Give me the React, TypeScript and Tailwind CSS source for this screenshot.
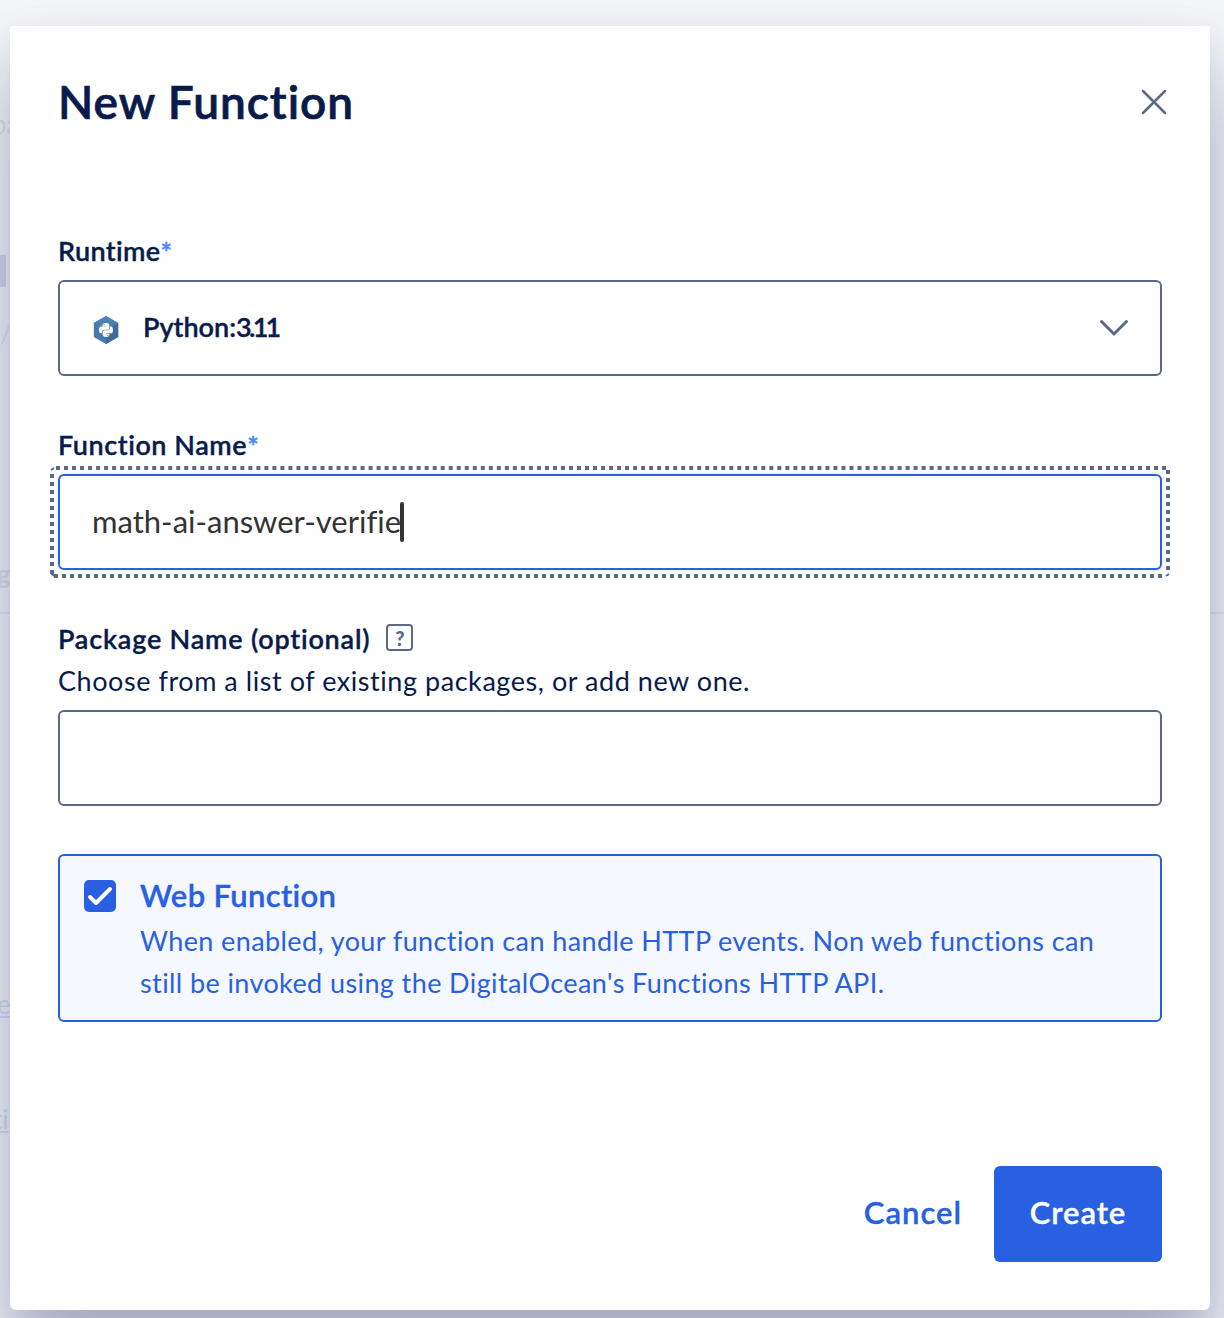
import type { ReactNode } from "react";
import { FaPython } from "react-icons/fa";

function Label({ children, required }: { children: ReactNode; required?: boolean }) {
  return (
    <span className="whitespace-nowrap text-[27px] leading-[41px] font-semibold text-[#081b4b] [-webkit-text-stroke:0.35px]">
      {children}
      {required && <span className="relative top-px tracking-normal font-bold text-[#4d88ff]">*</span>}
    </span>
  );
}

function PythonHexagon() {
  return (
    <span className="relative flex h-7 w-[26px] items-center justify-center">
      <svg viewBox="0 0 26 28" className="absolute inset-0 h-7 w-[26px]">
        <path d="M13 0 25.2 7v14L13 28 .8 21V7Z" fill="#4679ad" />
        <path d="M13 0 25.2 7 13 14 .8 7Z" fill="#4d80b8" />
        <path d="M25.2 7v14L13 28V14Z" fill="#41699d" />
      </svg>
      <FaPython className="relative size-4 text-white" />
    </span>
  );
}

function FocusRing() {
  return (
    <svg
      className="pointer-events-none absolute -top-[10px] -left-[10px] h-[112px] w-[1120px]"
      viewBox="0 0 1120 112"
      fill="none"
      stroke="#5b6987"
      strokeWidth="4"
    >
      <path d="M6 2H1116" strokeDasharray="4 4.015" />
      <path d="M4 110H1116" strokeDasharray="4 4" />
      <path d="M2 8V108" strokeDasharray="4 4" />
      <path d="M1118 4V108" strokeDasharray="4 4" />
      <path d="M1 4l3-2M1 107l3 3M1116 110l3-2" strokeWidth="2" />
    </svg>
  );
}

function Backdrop() {
  return (
    <div className="absolute inset-0 overflow-hidden bg-[#f3f5f9] text-[26px] leading-8 text-[#dfe2ea]">
      <span className="absolute -left-2 top-[108px]">pa</span>
      <div className="absolute left-0 top-[255px] h-8 w-1.5 bg-[#d3d8e6]" />
      <span className="absolute left-0 top-[317px]">/</span>
      <span className="absolute -left-[3px] top-[558px] font-bold">g</span>
      <div className="absolute left-0 top-[612px] h-0.5 w-full bg-[#e4e6ef]" />
      <span className="absolute -left-[3px] top-[988px] text-[#d2dcf5] underline">e</span>
      <span className="absolute -left-[7px] top-[1103px] text-[#d2dcf5] underline">ti</span>
    </div>
  );
}

export default function App() {
  return (
    <div className="relative h-[1318px] w-[1224px] overflow-hidden pt-[26px] pl-[10px] font-['Lato',sans-serif] [font-variant-ligatures:none]">
      <Backdrop />
      <main className="relative flex h-[1284px] w-[1200px] flex-col rounded-b-md bg-white px-12 shadow-[0_60px_80px_rgba(28,38,92,0.28),0_16px_40px_rgba(20,25,60,0.13)]">
        <header className="flex h-[152px] items-center justify-between">
          <h1 className="text-[46px] leading-none font-semibold tracking-[1px] text-[#081b4b] [-webkit-text-stroke:0.7px]">New Function</h1>
          <button aria-label="Close" className="-mr-1 size-6">
            <svg viewBox="0 0 24 24" className="size-6 overflow-visible" fill="none" stroke="#5b6987" strokeWidth="2.5" strokeLinecap="round">
              <path d="M1 1 23 23M23 1 1 23" />
            </svg>
          </button>
        </header>

        <section className="mt-[52px] flex flex-col">
          <div className="flex h-[50px] items-start tracking-[0.35px]">
            <Label required>Runtime</Label>
          </div>
          <button className="flex h-24 w-full items-center rounded-md border-2 border-[#5b6987] pr-8 pl-[33px]">
            <span className="mt-1"><PythonHexagon /></span>
            <span className="mb-0.5 ml-6 text-[27px] font-semibold text-[#081b4b] [-webkit-text-stroke:0.35px]">
              Python:<span className="tracking-[-2.7px]">3.11</span>
            </span>
            <svg viewBox="0 0 28 16" className="ml-auto h-4 w-7 overflow-visible" fill="none" stroke="#5b6987" strokeWidth="3" strokeLinecap="round" strokeLinejoin="round">
              <path d="M1.5 1.5 14 14 26.5 1.5" />
            </svg>
          </button>
        </section>

        <section className="mt-12 flex flex-col">
          <div className="flex h-[50px] items-start tracking-[0.55px]">
            <Label required>Function Name</Label>
          </div>
          <div className="relative flex h-24 items-center rounded-md border-2 border-[#2860e1] px-8 shadow-[0_0_4px_#cfe6d8]">
            <FocusRing />
            <span className="mb-0.5 text-[31px] text-[#333]">math-ai-answer-verifie</span>
            <span className="-ml-px h-10 w-1 rounded-sm bg-[#333]" />
          </div>
        </section>

        <section className="mt-12 flex flex-col">
          <div className="flex h-[42px] items-start">
            <span className="tracking-[0.79px]"><Label>Package Name (optional)</Label></span>
            <span className="mt-[6px] ml-4 flex size-[27px] items-center justify-center rounded-[4px] border-2 border-[#5b6987] text-[20px] leading-none font-black text-[#5b6987]">?</span>
          </div>
          <p className="h-[50px] text-[27px] leading-[42px] tracking-[0.55px] whitespace-nowrap text-[#081b4b]">Choose from a list of existing packages, or add new one.</p>
          <div className="h-24 rounded-md border-2 border-[#5b6987]" />
        </section>

        <label className="mt-12 flex h-[168px] shrink-0 gap-6 rounded-md border-2 border-[#2860e1] bg-[#f5f8ff] pt-[19px] pl-6 text-[#2860e1]">
          <span className="mt-[5px] flex size-8 items-center justify-center rounded-[5px] bg-[#2860e1]">
            <svg viewBox="0 0 32 32" className="size-8" fill="none" stroke="white" strokeWidth="4" strokeLinecap="round" strokeLinejoin="round">
              <path d="M6 17 12 23 26 9" />
            </svg>
          </span>
          <span className="flex flex-col whitespace-nowrap">
            <span className="mb-[5px] text-[31px] leading-10 font-semibold tracking-[0.33px] [-webkit-text-stroke:0.35px]">Web Function</span>
            <span className="text-[27px] leading-[42px] tracking-[0.4px]">When enabled, your function can handle HTTP events. Non web functions can</span>
            <span className="text-[27px] leading-[42px] tracking-[0.4px]">still be invoked using the DigitalOcean's Functions HTTP API.</span>
          </span>
        </label>

        <footer className="mt-36 flex items-center justify-end gap-8">
          <button className="mb-[3px] text-[31px] font-semibold tracking-[1px] text-[#2860e1] [-webkit-text-stroke:0.35px]">Cancel</button>
          <button className="h-24 w-[168px] rounded-md bg-[#2860e1] pb-[3px] text-[31px] font-semibold tracking-[0.9px] text-white [-webkit-text-stroke:0.35px]">Create</button>
        </footer>
      </main>
    </div>
  );
}
